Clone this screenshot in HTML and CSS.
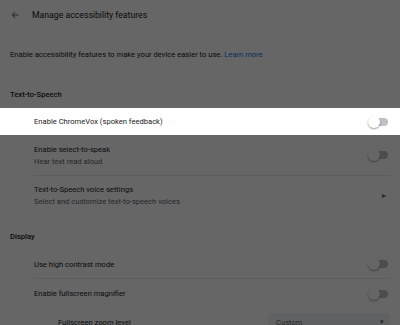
FILE: index.html
```html
<!DOCTYPE html>
<html lang="en">
<head>
    <meta charset="UTF-8">
    <title>Manage accessibility features</title>
    <link rel="stylesheet" href="styles.css">
</head>
<body>

    <div class="page">
        <div class="topbar">
            <svg class="back" width="10" height="10" viewBox="0 0 24 24"><path d="M20 11H7.83l5.59-5.59L12 4l-8 8 8 8 1.41-1.41L7.83 13H20v-2z" fill="#5f6368"/></svg>
            <span class="title">Manage accessibility features</span>
        </div>

        <p class="intro">Enable accessibility features to make your device easier to use. <a href="#">Learn more</a></p>

        <div class="section-head">Text-to-Speech</div>

        <div class="row highlight">
            <div class="label">Enable ChromeVox (spoken feedback)</div>
            <span class="toggle"></span>
        </div>

        <div class="row two">
            <div>
                <div class="label">Enable select-to-speak</div>
                <div class="sub">Hear text read aloud</div>
            </div>
            <span class="toggle"></span>
        </div>

        <div class="row two divided">
            <div>
                <div class="label">Text-to-Speech voice settings</div>
                <div class="sub">Select and customize text-to-speech voices</div>
            </div>
            <span class="arrow">&#9656;</span>
        </div>

        <div class="section-head display">Display</div>

        <div class="row">
            <div class="label">Use high contrast mode</div>
            <span class="toggle"></span>
        </div>

        <div class="row divided">
            <div class="label">Enable fullscreen magnifier</div>
            <span class="toggle"></span>
        </div>

        <div class="row sub-row">
            <div class="label">Fullscreen zoom level</div>
            <div class="select">Custom <span class="caret">&#9662;</span></div>
        </div>

        <div class="dim"></div>
    </div>

</body>
</html>
```

FILE: styles.css
```css
* { margin: 0; padding: 0; box-sizing: border-box; }

body {
    width: 400px;
    height: 325px;
    overflow: hidden;
    font-family: Roboto, 'Noto Sans', sans-serif;
    background: #fff;
    color: #202124;
}

.page { position: relative; height: 325px; }

/* --- HEADER --- */
.topbar {
    display: flex;
    align-items: center;
    height: 30px;
    padding-left: 10px;
}
.back { margin-right: 12px; }
.title { font-size: 8.7px; color: #202124; }

.intro {
    font-size: 7.6px;
    color: #202124;
    padding: 20px 10px 0;
    line-height: 10px;
}
.intro a { color: #1a73e8; text-decoration: none; }

.section-head {
    font-size: 7.6px;
    font-weight: 500;
    color: #202124;
    padding: 30px 10px 0;
    height: 48px;
}
.section-head.display { padding-top: 17px; height: 35px; }

/* --- ROWS --- */
.row {
    display: flex;
    align-items: center;
    justify-content: space-between;
    height: 28px;
    margin-left: 34px;
    margin-right: 10px;
    font-size: 7.6px;
}
.row.two { height: 40px; }
.row.divided { border-top: 1px solid #e8eaed; }
.row.divided:not(.two) { height: 30px; }
.label { color: #202124; }
.sub { color: #5f6368; margin-top: 3px; }

.row.highlight {
    position: relative;
    z-index: 2;
    background: #fff;
    margin: 0;
    padding: 0 10px 0 34px;
    height: 27px;
}

.row.sub-row { padding-left: 24px; }

.arrow { font-size: 8px; color: #5f6368; margin-right: 4px; }

/* toggle: off state */
.toggle {
    position: relative;
    width: 18px;
    height: 8px;
    border-radius: 4px;
    background: #bdc1c6;
    margin-right: 2px;
}
.toggle::before {
    content: "";
    position: absolute;
    left: -2px;
    top: -2px;
    width: 12px;
    height: 12px;
    border-radius: 50%;
    background: #fff;
    box-shadow: 0 1px 2px rgba(0,0,0,0.4);
}

.select {
    width: 122px;
    height: 18px;
    background: #f1f3f4;
    border-radius: 3px;
    color: #5f6368;
    display: flex;
    align-items: center;
    justify-content: space-between;
    padding: 0 6px 0 8px;
}
.caret { font-size: 7px; }

/* modal dimming layer */
.dim {
    position: absolute;
    inset: 0;
    background: rgba(0, 0, 0, 0.6);
    z-index: 1;
}
```
